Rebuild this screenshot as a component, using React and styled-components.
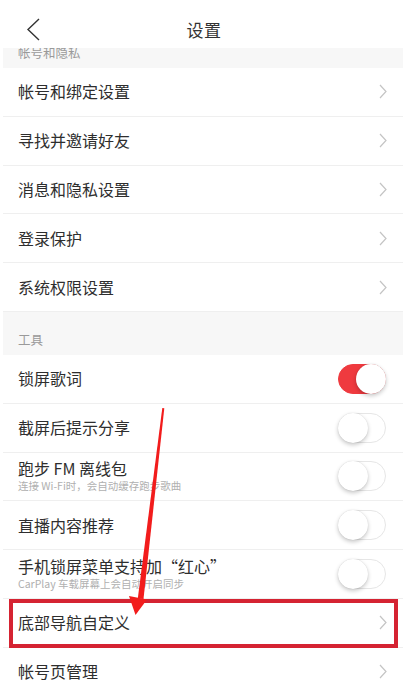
import React from "react";
import styled, { createGlobalStyle } from "styled-components";

const GlobalStyle = createGlobalStyle`
  html, body { margin: 0; padding: 0; background: #fff; }
  body { font-family: "Noto Sans CJK SC", "Noto Sans", sans-serif; }
`;

const Page = styled.div`
  position: relative;
  width: 412px;
  height: 694px;
  overflow: hidden;
  background: #fff;
  box-sizing: border-box;
  padding: 0 9px 0 3px;
`;

const NavBar = styled.div`
  position: relative;
  z-index: 2;
  height: 48px;
  display: flex;
  align-items: center;
  justify-content: center;
  background: #fff;
`;

const BackButton = styled.div`
  position: absolute;
  left: 22px;
  top: 18px;
  width: 16px;
  height: 23px;
  display: flex;
`;

const Title = styled.div`
  font-size: 17px;
  color: #333;
  margin-top: 10px;
  margin-left: 2px;
  letter-spacing: 0.5px;
`;

const SectionHeader = styled.div`
  height: ${(p) => p.$h}px;
  background: #f7f7f7;
  display: flex;
  align-items: flex-end;
  padding: 0 0 9px 15px;
  box-sizing: border-box;
  overflow: hidden;
  font-size: 12.5px;
  line-height: 13px;
  color: #9a9a9a;
`;

const Row = styled.div`
  position: relative;
  height: 48.8px;
  box-sizing: border-box;
  display: flex;
  align-items: center;
  justify-content: space-between;
  padding: 0 17px 0 15px;
  border-bottom: 1px solid #efefef;
  background: #fff;

  ${(p) =>
    p.$highlight &&
    `
    &::after {
      content: "";
      position: absolute;
      left: 6px;
      right: 5px;
      top: 0;
      bottom: -1px;
      border: 4.5px solid #d52332;
      pointer-events: none;
    }
  `}
`;

const TextCol = styled.div`
  display: flex;
  flex-direction: column;
  margin-top: ${(p) => (p.$two ? "-1px" : "0")};
`;

const RowTitle = styled.div`
  font-size: 16px;
  line-height: 19px;
  color: #2e2e2e;
`;

const RowSub = styled.div`
  font-size: 10.5px;
  line-height: 15px;
  color: #b0b0b0;
`;

const Toggle = styled.div`
  position: relative;
  width: 48px;
  height: 30px;
  border-radius: 15px;
  box-sizing: border-box;
  flex-shrink: 0;
  background: ${(p) => (p.$on ? "#ef3a3f" : "#fff")};
  border: 1px solid ${(p) => (p.$on ? "#ef3a3f" : "#e6e6e6")};
`;

const Knob = styled.div`
  position: absolute;
  top: -1px;
  ${(p) => (p.$on ? "right: -1px;" : "left: -1px;")}
  width: 30px;
  height: 30px;
  border-radius: 50%;
  background: #fff;
  box-shadow: 0 2px 4px rgba(0, 0, 0, 0.22), 0 0 1px rgba(0, 0, 0, 0.15);
`;

const Chevron = styled.svg`
  width: 8px;
  height: 15px;
  flex-shrink: 0;
  margin-right: -1px;
`;

const Arrow = styled.svg`
  position: absolute;
  left: 0;
  top: 0;
  width: 412px;
  height: 694px;
  pointer-events: none;
  z-index: 3;
`;

const ChevronIcon = () => (
  <Chevron viewBox="0 0 8 15">
    <polyline points="1,1 7,7.5 1,14" fill="none" stroke="#c4c4c4" strokeWidth="1.2" />
  </Chevron>
);

const Switch = ({ on }) => (
  <Toggle $on={on}>
    <Knob $on={on} />
  </Toggle>
);

const LinkRow = ({ title, highlight }) => (
  <Row $highlight={highlight}>
    <RowTitle>{title}</RowTitle>
    <ChevronIcon />
  </Row>
);

const SwitchRow = ({ title, sub, on }) => (
  <Row>
    <TextCol $two={!!sub}>
      <RowTitle>{title}</RowTitle>
      {sub && <RowSub>{sub}</RowSub>}
    </TextCol>
    <Switch on={on} />
  </Row>
);

export default function App() {
  return (
    <>
      <GlobalStyle />
      <Page>
        <NavBar>
          <BackButton>
            <svg width="16" height="23" viewBox="0 0 16 23">
              <polyline points="14,1 3,11.5 14,22" fill="none" stroke="#333" strokeWidth="1.4" />
            </svg>
          </BackButton>
          <Title>设置</Title>
        </NavBar>
        <SectionHeader $h={20}>帐号和隐私</SectionHeader>
        <LinkRow title="帐号和绑定设置" />
        <LinkRow title="寻找并邀请好友" />
        <LinkRow title="消息和隐私设置" />
        <LinkRow title="登录保护" />
        <LinkRow title="系统权限设置" />
        <SectionHeader $h={43}>工具</SectionHeader>
        <SwitchRow title="锁屏歌词" on />
        <SwitchRow title="截屏后提示分享" />
        <SwitchRow title="跑步 FM 离线包" sub="连接 Wi-Fi时，会自动缓存跑步歌曲" />
        <SwitchRow title="直播内容推荐" />
        <SwitchRow title="手机锁屏菜单支持加“红心”" sub="CarPlay 车载屏幕上会自动开启同步" />
        <LinkRow title="底部导航自定义" highlight />
        <LinkRow title="帐号页管理" />
        <Arrow viewBox="0 0 412 694">
          <polygon points="162.3,408 164.3,408.3 143.5,599 137.8,598.5" fill="#f21c1c" />
          <polygon points="129,596 147,599.5 135.5,615" fill="#f21c1c" />
        </Arrow>
      </Page>
    </>
  );
}
